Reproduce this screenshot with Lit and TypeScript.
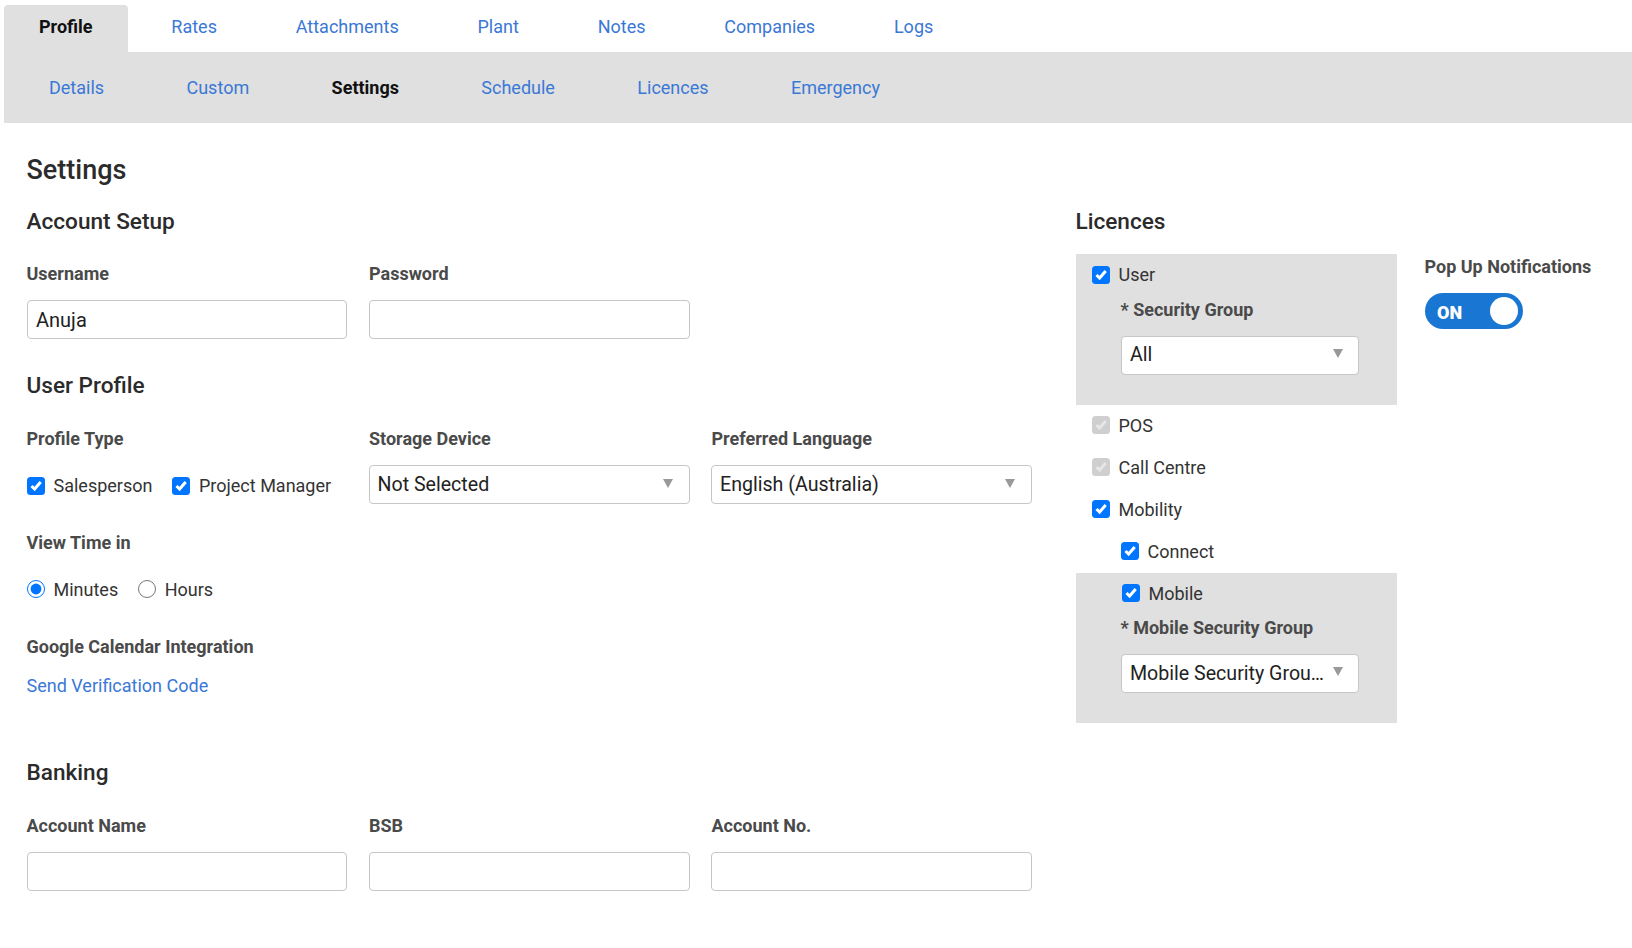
import { LitElement, html, css } from "lit";
import { customElement } from "lit/decorators.js";

@customElement("app-root")
export class AppRoot extends LitElement {
  static styles = css`
    :host { display: block; min-height: 948px; background: #fff; font-family: Roboto, "Liberation Sans", sans-serif; font-size: 18px; color: #333; }
    * { box-sizing: border-box; }
    a { color: #3a78d6; text-decoration: none; }
    .tabs { display: flex; gap: 6.8px; height: 52px; padding: 5px 0 0 4px; }
    .tab { display: flex; align-items: center; padding: 0 36px 5px; font-size: 18px; }
    .tab.active { background: #e0e0e0; border-radius: 4px 4px 0 0; color: #111; font-weight: 700; padding: 0 35px 5px; margin-right: 1px; }
    .sub { display: flex; align-items: center; gap: 82.4px; height: 71px; margin-left: 4px; padding: 0 45px; background: #e0e0e0; font-size: 18px; }
    .sub .on { color: #111; font-weight: 700; }
    .body { padding: 32px 0 0 27px; }
    h1 { margin: 0 0 0 -0.5px; height: 30px; line-height: 30px; font-size: 27px; font-weight: 500; color: #2b2b2b; }
    h2 { margin: 0 0 0 -0.5px; height: 26px; line-height: 26px; font-size: 22.6px; font-weight: 500; color: #2b2b2b; }
    .columns { display: flex; margin-top: 24px; }
    .left { width: 1005px; margin-right: 44px; }
    .grid { display: grid; grid-template-columns: 320px 321px 321px; column-gap: 21.5px; }
    .label { height: 20px; line-height: 20px; font-size: 18px; font-weight: 700; color: #4a4a4a; margin-bottom: 16px; margin-left: -0.5px; white-space: nowrap; }
    .grid > div + div .label { margin-left: 0.5px; }
    .m1 { margin-top: 29px; }
    .m2 { margin-top: 34px; }
    .m3 { margin-top: 30px; }
    .m4 { margin-top: 29px; }
    .m5 { margin-top: 38px; }
    .m6 { margin-top: 64px; }
    .input, .select { display: flex; align-items: center; height: 39px; width: 100%; padding: 0 8px; background: #fff; border: 1px solid #c6c6c6; border-radius: 4px; font: inherit; font-size: 19.6px; color: #222; }
    .input { font-size: 20px; }
    .select { position: relative; padding-right: 36px; }
    .select span { flex: 1; min-width: 0; white-space: nowrap; padding-bottom: 1px; }
    .select i { position: absolute; right: 16px; top: 13px; border-left: 5px solid transparent; border-right: 5px solid transparent; border-top: 9px solid #999; }
    .select.narrow i { right: 15px; top: 12px; }
    .checks { display: flex; align-items: center; gap: 20px; height: 39px; padding-top: 2px; }
    .checks.radios { height: 20px; padding-top: 0; margin-top: 26px; }
    .c { display: inline-flex; align-items: center; gap: 8.5px; white-space: nowrap; font-size: 18px; color: #333; }
    input[type="radio"] { width: 18px; height: 18px; margin: 0; flex: none; accent-color: #0075ff; }
    .box { display: block; width: 18px; height: 18px; flex: none; }
    .box rect { fill: #0075ff; }
    .box path { fill: none; stroke: #fff; stroke-width: 3; }
    .box.off rect { fill: #cfcfcf; }
    .box.off path { stroke: #e6e6e6; }
    .link { display: block; height: 20px; line-height: 20px; font-size: 18px; margin: 19px 0 0 -0.5px; }
    .right { display: flex; gap: 28px; align-items: flex-start; }
    .lic { width: 321px; }
    .lic h2 { margin-bottom: 19px; }
    .group { background: #e0e0e0; padding-bottom: 30px; }
    .row { display: flex; align-items: center; height: 42px; padding: 0 0 1px 16px; }
    .row.in { padding-left: 45px; }
    .row.in2 { padding-left: 46px; }
    .ind { margin: 3.5px 0 0 45px; width: 238px; }
    .popup { padding-top: 48px; }
    .popup .label { margin-bottom: 15.5px; }
    .toggle { display: flex; align-items: center; justify-content: space-between; width: 98px; height: 36px; padding: 0 5px 0 12px; border-radius: 18px; background: #1976d2; color: #fff; font-size: 18px; font-weight: 700; }
    .toggle b { padding-top: 4px; }
    .toggle i { width: 28px; height: 28px; border-radius: 50%; background: #fff; }
  `;

  private check(text: string, disabled = false) {
    return html`<label class="c"
      ><svg class="box ${disabled ? "off" : ""}" viewBox="0 0 18 18" role="checkbox" aria-checked="true">
        <rect width="18" height="18" rx="3.5"></rect>
        <path d="M4.5 9 L7.6 12.1 L13.7 5"></path> </svg
      >${text}</label
    >`;
  }

  private select(text: string, narrow = false) {
    return html`<div class="select ${narrow ? "narrow" : ""}"><span>${text}</span><i></i></div>`;
  }

  render() {
    const top = ["Rates", "Attachments", "Plant", "Notes", "Companies", "Logs"];
    const sub = ["Details", "Custom", "Settings", "Schedule", "Licences", "Emergency"];
    return html`
      <nav class="tabs">
        <div class="tab active">Profile</div>
        ${top.map((t) => html`<a class="tab" href="#">${t}</a>`)}
      </nav>
      <nav class="sub">
        ${sub.map((t) => (t === "Settings" ? html`<span class="on">${t}</span>` : html`<a href="#">${t}</a>`))}
      </nav>
      <main class="body">
        <h1>Settings</h1>
        <div class="columns">
          <section class="left">
            <h2>Account Setup</h2>
            <div class="grid m1">
              <div><div class="label">Username</div><input class="input" value="Anuja" /></div>
              <div><div class="label">Password</div><input class="input" /></div>
            </div>
            <h2 class="m2">User Profile</h2>
            <div class="grid m3">
              <div>
                <div class="label">Profile Type</div>
                <div class="checks">${this.check("Salesperson")}${this.check("Project Manager")}</div>
              </div>
              <div><div class="label">Storage Device</div>${this.select("Not Selected")}</div>
              <div><div class="label">Preferred Language</div>${this.select("English (Australia)")}</div>
            </div>
            <div class="label m4">View Time in</div>
            <div class="checks radios">
              <label class="c"><input type="radio" name="time" checked />Minutes</label>
              <label class="c"><input type="radio" name="time" />Hours</label>
            </div>
            <div class="label m5">Google Calendar Integration</div>
            <a class="link" href="#">Send Verification Code</a>
            <h2 class="m6">Banking</h2>
            <div class="grid m3">
              <div><div class="label">Account Name</div><input class="input" /></div>
              <div><div class="label">BSB</div><input class="input" /></div>
              <div><div class="label">Account No.</div><input class="input" /></div>
            </div>
          </section>
          <section class="right">
            <div class="lic">
              <h2>Licences</h2>
              <div class="group">
                <div class="row">${this.check("User")}</div>
                <div class="ind">
                  <div class="label">* Security Group</div>
                  ${this.select("All", true)}
                </div>
              </div>
              <div class="row">${this.check("POS", true)}</div>
              <div class="row">${this.check("Call Centre", true)}</div>
              <div class="row">${this.check("Mobility")}</div>
              <div class="row in">${this.check("Connect")}</div>
              <div class="group">
                <div class="row in2">${this.check("Mobile")}</div>
                <div class="ind">
                  <div class="label">* Mobile Security Group</div>
                  ${this.select("Mobile Security Grou…", true)}
                </div>
              </div>
            </div>
            <div class="popup">
              <div class="label">Pop Up Notifications</div>
              <div class="toggle"><b>ON</b><i></i></div>
            </div>
          </section>
        </div>
      </main>
    `;
  }
}
